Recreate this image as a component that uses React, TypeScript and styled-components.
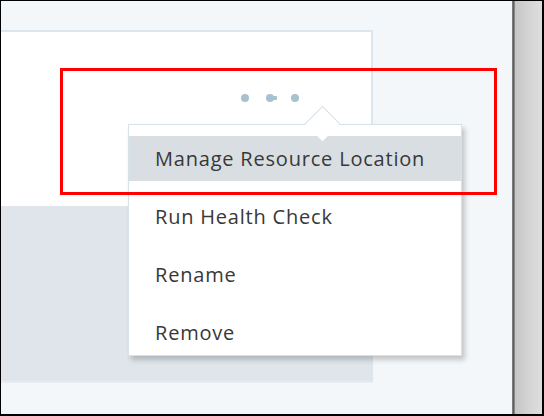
import React from "react";
import styled, { createGlobalStyle } from "styled-components";

const GlobalStyle = createGlobalStyle`
  html, body { margin: 0; padding: 0; }
  body { background: #ffffff; font-family: "Open Sans", "Liberation Sans", sans-serif; }
  * { box-sizing: border-box; }
`;

const Frame = styled.div`
  position: relative;
  width: 544px;
  height: 416px;
  display: flex;
  border-style: solid;
  border-color: #000;
  border-width: 1px 2px 2px 1px;
  overflow: hidden;
`;

const Main = styled.div`
  flex: 1;
  background: #f4f7fa;
  padding-top: 29px;
`;

const ScrollEdge = styled.div`
  width: 30px;
  display: flex;
`;

const EdgeLine = styled.div`
  width: 3px;
  background: linear-gradient(to right, #8a8a8a, #5f5f5f, #9a9a9a);
`;

const EdgeFill = styled.div`
  flex: 1;
  background: linear-gradient(to right, #c6c6c6, #d6d6d6 60%, #dedede);
`;

const Card = styled.div`
  width: 372px;
  border-top: 2px solid #dbe6ee;
  border-right: 2px solid #dbe6ee;
  border-bottom: 2px solid #e3edf3;
  display: flex;
  flex-direction: column;
`;

const CardTop = styled.div`
  height: 174px;
  background: #ffffff;
  display: flex;
  justify-content: flex-end;
  padding: 62px 72px 0 0;
`;

const CardBottom = styled.div`
  height: 175px;
  background: #dfe5eb;
`;

const MoreWrap = styled.div`
  position: relative;
  height: 10px;
`;

const Dots = styled.div`
  display: flex;
  gap: 17px;
  align-items: center;
`;

const Dot = styled.span<{ $tail?: boolean }>`
  width: 8px;
  height: 8px;
  border-radius: 50%;
  background: #a9c1cf;
  position: relative;
  ${(p) =>
    p.$tail
      ? `&::after { content: ""; position: absolute; left: 6px; top: 2px; width: 5px; height: 4px; background: #a9c1cf; border-radius: 1px; }`
      : ""}
`;

const Menu = styled.div`
  position: absolute;
  left: -113px;
  top: 30px;
  width: 334px;
  height: 232px;
  background: #ffffff;
  border: 1.5px solid #d6e1e8;
  box-shadow: 3px 4px 5px rgba(0, 0, 0, 0.2);
  padding-top: 11px;
  display: flex;
  flex-direction: column;
  gap: 13px;
`;

const Arrow = styled.span`
  position: absolute;
  left: 181px;
  top: -14px;
  width: 25px;
  height: 25px;
  background: #ffffff;
  border-top: 1.5px solid #d6e1e8;
  border-left: 1.5px solid #d6e1e8;
  transform: rotate(45deg);
`;

const Item = styled.div<{ $active?: boolean }>`
  height: 45px;
  display: flex;
  align-items: center;
  padding-left: 26px;
  font-size: 20px;
  letter-spacing: 0.8px;
  color: #383838;
  background: ${(p) => (p.$active ? "#d9dee2" : "transparent")};
  white-space: nowrap;
`;

const Highlight = styled.div`
  position: absolute;
  left: 59px;
  top: 67px;
  width: 437px;
  height: 127px;
  border: 3px solid #ff0000;
  pointer-events: none;
`;

export default function App() {
  return (
    <>
      <GlobalStyle />
      <Frame>
        <Main>
          <Card>
            <CardTop>
              <MoreWrap>
                <Dots>
                  <Dot />
                  <Dot $tail />
                  <Dot />
                </Dots>
                <Menu>
                  <Arrow />
                  <Item $active>Manage Resource Location</Item>
                  <Item>Run Health Check</Item>
                  <Item>Rename</Item>
                  <Item>Remove</Item>
                </Menu>
              </MoreWrap>
            </CardTop>
            <CardBottom />
          </Card>
        </Main>
        <ScrollEdge>
          <EdgeLine />
          <EdgeFill />
        </ScrollEdge>
        <Highlight />
      </Frame>
    </>
  );
}
